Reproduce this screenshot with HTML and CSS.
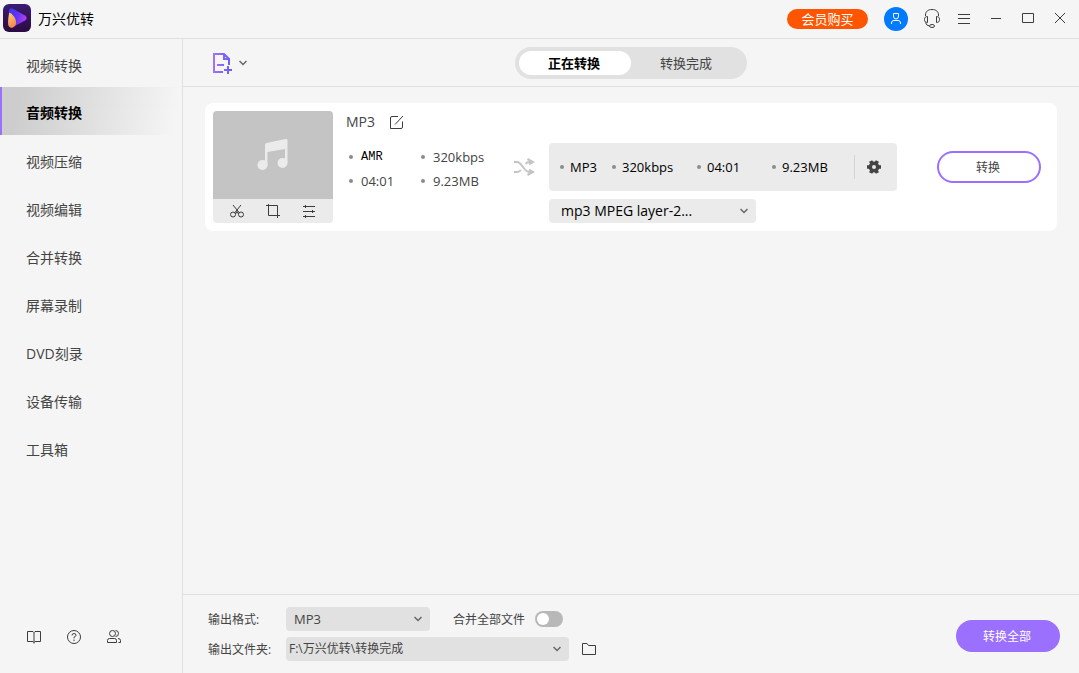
FILE: index.html
```html
<!DOCTYPE html>
<html lang="zh-CN">
<head>
<meta charset="utf-8">
<meta name="viewport" content="width=device-width, initial-scale=1">
<title>万兴优转</title>
<link rel="stylesheet" href="styles.css">
</head>
<body>
<div class="app">
  <header class="titlebar">
    <svg class="logo" viewBox="0 0 28 28" aria-hidden="true">
      <defs>
        <linearGradient id="lg-bg" x1="0" y1="0" x2="0" y2="1"><stop offset="0" stop-color="#3a1c72"/><stop offset="1" stop-color="#2c0b42"/></linearGradient>
        <linearGradient id="lg-play" x1="0" y1="0" x2="1" y2="0.3"><stop offset="0" stop-color="#3a35f0"/><stop offset="0.55" stop-color="#6236f5"/><stop offset="1" stop-color="#b63cf0"/></linearGradient>
        <linearGradient id="lg-drop" x1="0" y1="0" x2="0.4" y2="1"><stop offset="0" stop-color="#ffd27a"/><stop offset="1" stop-color="#f58a4a"/></linearGradient>
      </defs>
      <rect width="28" height="28" rx="6" fill="url(#lg-bg)"/>
      <path d="M6 6.500Q6.500 3.500 9.500 4.500L22 11.500Q25.500 14 22 16.500L9 23.500Q6 24 6 20z" fill="url(#lg-play)"/>
      <path d="M6.300 8.500C11 11 14 16 12.800 20.500C11.500 24.500 6 25 5.200 20.500C4.800 17 5.500 12 6.300 8.500z" fill="url(#lg-drop)"/>
    </svg>
    <h1 class="app-name">万兴优转</h1>
    <div class="window-tools">
      <button class="buy" type="button">会员购买</button>
      <button class="tool avatar" type="button" aria-label="账户">
        <svg viewBox="0 0 24 24"><path d="M9.500 6.500H14.500V9Q14.500 12 12 12Q9.500 12 9.500 9zM7.500 17V16Q7.500 13.500 10 13.500H14Q16.500 13.500 16.500 16V17"/></svg>
      </button>
      <button class="tool" type="button" aria-label="客服">
        <svg viewBox="0 0 24 24"><path d="M5.500 9V8C5.500 4.500 8 2.500 12 2.500S18.500 4.500 18.500 8V9M7.500 9.500V15.500C5.500 15.500 4.500 14.500 4.500 12.500S5.500 9.500 7.500 9.500zM16.500 9.500V15.500C18.500 15.500 19.500 14.500 19.500 12.500S18.500 9.500 16.500 9.500zM5.500 15.500Q6 18.500 9.500 19"/><ellipse cx="12" cy="19" rx="2.500" ry="1.500"/></svg>
      </button>
      <button class="tool" type="button" aria-label="菜单">
        <svg viewBox="0 0 24 24"><path d="M6 7.500H18M6 11.500H18M6 16.500H18"/></svg>
      </button>
      <button class="tool" type="button" aria-label="最小化">
        <svg viewBox="0 0 24 24"><path d="M7 11.500H17"/></svg>
      </button>
      <button class="tool" type="button" aria-label="最大化">
        <svg viewBox="0 0 24 24"><path d="M6.500 6.500H17.500V15.500H6.500z"/></svg>
      </button>
      <button class="tool" type="button" aria-label="关闭">
        <svg viewBox="0 0 24 24"><path d="M7 6L17 16M17 6L7 16"/></svg>
      </button>
    </div>
  </header>

  <aside class="sidebar">
    <nav class="nav">
      <a class="nav-item" href="#">视频转换</a>
      <a class="nav-item active" href="#" aria-current="page">音频转换</a>
      <a class="nav-item" href="#">视频压缩</a>
      <a class="nav-item" href="#">视频编辑</a>
      <a class="nav-item" href="#">合并转换</a>
      <a class="nav-item" href="#">屏幕录制</a>
      <a class="nav-item" href="#">DVD刻录</a>
      <a class="nav-item" href="#">设备传输</a>
      <a class="nav-item" href="#">工具箱</a>
    </nav>
    <div class="side-tools">
      <button class="tool" type="button" aria-label="指南">
        <svg viewBox="0 0 24 24"><path d="M12 7.500L11 6.500H5.500V16.500H11L12 17.500L13 16.500H18.500V6.500H13L12 7.500V18.500"/></svg>
      </button>
      <button class="tool" type="button" aria-label="帮助">
        <svg viewBox="0 0 24 24"><circle cx="12" cy="12" r="6.500"/><path d="M10 10.500Q10 8.500 12 8.500T14 10.300Q14 11.300 12 12.200V13.300M12 14.500V16"/></svg>
      </button>
      <button class="tool" type="button" aria-label="社区">
        <svg viewBox="0 0 24 24"><circle cx="10.500" cy="8.500" r="3"/><path d="M13.500 5.500Q16.500 5.500 16.500 8.500T13.500 11.500M5.500 17.500V15.500Q5.500 13.500 7.500 13.500H12.500Q14.500 13.500 14.500 15.500V17.500zM16 13.500Q18.500 13.500 18.500 15.500V17.500H16.500"/></svg>
      </button>
    </div>
  </aside>

  <main class="main">
    <div class="toolbar">
      <button class="add" type="button" aria-label="添加文件">
        <svg class="add-icon" viewBox="0 0 20 22">
          <defs><linearGradient id="lg-add" gradientUnits="userSpaceOnUse" x1="0" y1="0" x2="20" y2="0"><stop offset="0" stop-color="#9f74fa"/><stop offset="1" stop-color="#6458f5"/></linearGradient></defs>
          <path d="M10 20H1V2H11L16 7V13M11 2V7H16M4 13H11M11 18H19M15 14V22" fill="none" stroke="url(#lg-add)" stroke-width="2"/>
        </svg>
        <svg class="chevron" viewBox="0 0 8 6"><path d="M0.500 1L4 4.500L7.500 1"/></svg>
      </button>
      <div class="tabs" role="tablist">
        <button class="tab selected" type="button" role="tab" aria-selected="true">正在转换</button>
        <button class="tab" type="button" role="tab" aria-selected="false">转换完成</button>
      </div>
    </div>

    <section class="tasks">
      <article class="card">
        <div class="thumb">
          <div class="cover">
            <svg class="note" viewBox="0 0 32 32"><path d="M8 6Q8 4.500 9.500 4L28.500 0Q30.500 -0.300 30.500 1.500V24H28V10L10.500 13V27H8z"/><circle cx="5.500" cy="26" r="5"/><circle cx="25.500" cy="24" r="5"/></svg>
          </div>
          <div class="thumb-tools">
            <button class="tool" type="button" aria-label="剪切">
              <svg viewBox="0 0 24 24"><path d="M8 6L14.500 14M16 6L9.500 14"/><circle cx="8" cy="15.500" r="2.500"/><circle cx="16" cy="15.500" r="2.500"/><path d="M10.500 15L12 12.500L13.500 15"/></svg>
            </button>
            <button class="tool" type="button" aria-label="裁剪">
              <svg viewBox="0 0 24 24"><path d="M7.500 5V16.500H19M5 6.500H16.500V19"/></svg>
            </button>
            <button class="tool" type="button" aria-label="效果">
              <svg viewBox="0 0 24 24"><path d="M6 7.500H18M6 12.500H18M6 17.500H18M8.500 6V9M15.500 11V14M8.500 16V19"/></svg>
            </button>
          </div>
        </div>

        <div class="source">
          <div class="name-row">
            <h2 class="name">MP3</h2>
            <button class="tool" type="button" aria-label="重命名">
              <svg viewBox="0 0 24 24"><path d="M13 6.500H7Q5.500 6.500 5.500 8V18.500H16Q17.500 18.500 17.500 17V11.500M10 14.500L18 6"/></svg>
            </button>
          </div>
          <ul class="meta">
            <li class="bitmap">AMR</li>
            <li>320kbps</li>
            <li>04:01</li>
            <li>9.23MB</li>
          </ul>
        </div>

        <svg class="shuffle" viewBox="0 0 22 18" aria-hidden="true"><path d="M1 4H4C9 4 11 14 16 14H20M1 14H4Q6.500 14 8 12M12.500 6Q14 4 16 4H20M14.500 1L20 4L16 6.500M16 11.500L20 14L14.500 17"/></svg>

        <div class="target">
          <div class="specs">
            <ul class="spec-list">
              <li>MP3</li>
              <li>320kbps</li>
              <li>04:01</li>
              <li>9.23MB</li>
            </ul>
            <button class="gear" type="button" aria-label="设置">
              <svg viewBox="0 0 16 16"><circle cx="8" cy="8" r="3.700" stroke-width="3.400"/><path d="M1 8H3.500M12.500 8H15M4.600 2L5.800 4.200M11.400 2L10.200 4.200M4.600 14L5.800 11.800M11.400 14L10.200 11.800" stroke-width="3.600"/></svg>
            </button>
          </div>
          <div class="pick codec">
            <select aria-label="编码器"><option>mp3 MPEG layer-2...</option></select>
            <svg class="chevron" viewBox="0 0 8 6"><path d="M0.500 1L4 4.500L7.500 1"/></svg>
          </div>
        </div>

        <button class="convert" type="button">转换</button>
      </article>
    </section>

    <footer class="output">
      <div class="fields">
        <div class="field">
          <label for="format">输出格式:</label>
          <div class="pick format">
            <select id="format"><option>MP3</option></select>
            <svg class="chevron" viewBox="0 0 8 6"><path d="M0.500 1L4 4.500L7.500 1"/></svg>
          </div>
          <label class="merge" for="merge">合并全部文件</label>
          <input class="switch" id="merge" type="checkbox" role="switch">
        </div>
        <div class="field">
          <label for="folder">输出文件夹:</label>
          <div class="pick folder">
            <select id="folder"><option>F:\万兴优转\转换完成</option></select>
            <svg class="chevron" viewBox="0 0 8 6"><path d="M0.500 1L4 4.500L7.500 1"/></svg>
          </div>
          <button class="tool open" type="button" aria-label="打开文件夹">
            <svg viewBox="0 0 24 24"><path d="M5.500 17.500V6.500H10L11.500 8.500H18.500V17.500z"/></svg>
          </button>
        </div>
      </div>
      <button class="convert-all" type="button">转换全部</button>
    </footer>
  </main>
</div>
</body>
</html>
```

FILE: styles.css
```css
* {
  box-sizing: border-box;
}

body {
  margin: 0;
  background: #f5f5f5;
  color: #444;
  font: 13px/20px "Open Sans", "Noto Sans CJK SC", sans-serif;
}

h1, h2, ul {
  margin: 0;
  padding: 0;
  font-weight: 400;
  list-style: none;
}

button, select {
  margin: 0;
  padding: 0;
  border: 0;
  background: none;
  color: inherit;
  font: inherit;
}

svg {
  display: block;
}

.app {
  display: grid;
  grid-template-columns: 183px minmax(0, 1fr);
  grid-template-rows: auto minmax(0, 1fr);
  min-height: 100vh;
}

/* Title bar */
.titlebar {
  grid-column: 1 / -1;
  display: flex;
  align-items: center;
  height: 39px;
  padding: 0 7px 0 3px;
  border-bottom: 1px solid #e0e0e0;
}

.logo {
  width: 28px;
  height: 28px;
  margin-bottom: 2px;
}

.app-name {
  margin-left: 7px;
  color: #000;
  font-size: 14px;
}

.window-tools {
  display: flex;
  align-items: center;
  gap: 8px;
  margin-left: auto;
}

.tool {
  flex: none;
  width: 24px;
  height: 24px;
}

.tool svg {
  width: 24px;
  height: 24px;
  fill: none;
  stroke: #3c3c3c;
  stroke-width: 1;
}

.buy {
  width: 81px;
  height: 20px;
  margin-right: 8px;
  border-radius: 10px;
  background: #ff5500;
  color: #fff;
}

.avatar {
  margin-right: 4px;
  border-radius: 50%;
  background: #007aff;
}

.tool.avatar svg {
  stroke: #fff;
}

/* Sidebar */
.sidebar {
  display: flex;
  flex-direction: column;
  justify-content: space-between;
  border-right: 1px solid #e0e0e0;
}

.nav-item {
  display: flex;
  align-items: center;
  height: 48px;
  padding: 6px 0 0 26px;
  color: #444;
  font-size: 14px;
  text-decoration: none;
}

.nav-item.active {
  padding-top: 4px;
  padding-left: 24px;
  border-left: 2px solid #9b70ff;
  background: linear-gradient(100deg, #cdcdcd 10%, #f5f5f5 95%);
  color: #000;
  font-weight: 700;
}

.side-tools {
  display: flex;
  gap: 16px;
  padding: 0 22px 24px;
}

/* Main area */
.main {
  display: flex;
  flex-direction: column;
}

.toolbar {
  display: grid;
  grid-template-columns: 1fr auto 1fr;
  align-items: center;
  height: 48px;
  padding: 0 30px;
  border-bottom: 1px solid #e0e0e0;
}

.add {
  display: flex;
  align-items: center;
  gap: 6px;
}

.add-icon {
  width: 20px;
  height: 22px;
}

.chevron {
  width: 8px;
  height: 6px;
  fill: none;
  stroke: #666;
  stroke-width: 1.500;
}

.tabs {
  display: flex;
  padding: 4px;
  border-radius: 16px;
  background: #e1e1e1;
}

.tab {
  width: 112px;
  height: 24px;
  padding-right: 2px;
  border-radius: 12px;
}

.tab.selected {
  background: #fff;
  color: #000;
  font-weight: 700;
}

.tasks {
  flex: 1;
  padding: 16px 22px;
}

.card {
  display: flex;
  align-items: flex-start;
  padding: 8px 16px 8px 8px;
  border-radius: 8px;
  background: #fff;
}

.thumb {
  flex: none;
  width: 120px;
  border-radius: 4px;
  background: #ebebeb;
  overflow: hidden;
}

.cover {
  display: grid;
  place-items: center;
  height: 88px;
  background: #c4c4c4;
}

.note {
  width: 32px;
  height: 32px;
  fill: #ebebeb;
}

.thumb-tools {
  display: flex;
  justify-content: center;
  gap: 12px;
}

.source {
  flex: none;
  width: 167px;
  margin-left: 13px;
}

.name-row {
  display: flex;
  align-items: center;
  gap: 10px;
  height: 22px;
}

.name {
  font-size: 14px;
}

.meta {
  display: grid;
  grid-template-columns: 72px 1fr;
  gap: 4px 0;
  padding: 14px 0 0 3px;
}

.meta li, .spec-list li {
  display: flex;
  align-items: center;
  gap: 8px;
}

.meta li::before, .spec-list li::before {
  content: "";
  width: 4px;
  height: 4px;
  border-radius: 50%;
  background: #8c8c8c;
}

.meta .bitmap {
  color: #000;
  font-family: "Liberation Mono", monospace;
  font-size: 12px;
}

.shuffle {
  flex: none;
  width: 22px;
  height: 18px;
  margin: 47px 14px 0 0;
  fill: none;
  stroke: #c4c4c4;
  stroke-width: 2;
}

.target {
  flex: none;
  width: 348px;
  padding-top: 32px;
}

.specs {
  display: flex;
  align-items: center;
  justify-content: space-between;
  height: 48px;
  margin-bottom: 8px;
  padding: 0 15px 0 11px;
  border-radius: 4px;
  background: #ebebeb;
  color: #000;
}

.spec-list {
  display: grid;
  grid-template-columns: 52px 85px 75px auto;
}

.spec-list li {
  gap: 6px;
}

.gear {
  height: 24px;
  padding-left: 11px;
  border-left: 1px solid #d4d4d4;
}

.gear svg {
  width: 16px;
  height: 16px;
  fill: none;
  stroke: #444;
}

/* Drop-downs: the arrow shares the cell of the select */
.pick {
  display: grid;
  align-items: center;
  height: 24px;
  border-radius: 4px;
  background: #e1e1e1;
}

.pick select, .pick .chevron {
  grid-area: 1 / 1;
}

.pick select {
  width: 100%;
  height: 24px;
  padding: 0 24px 0 8px;
  appearance: none;
}

.pick .chevron {
  justify-self: end;
  margin-right: 8px;
  pointer-events: none;
}

.pick.codec {
  width: 207px;
  background: #ebebeb;
  color: #000;
  font-size: 14px;
}

.codec select {
  padding-left: 12px;
}

.convert, .convert-all {
  flex: none;
  width: 104px;
  height: 32px;
  padding: 2px 2px 0 0;
  border-radius: 16px;
  font-size: 12px;
}

.convert {
  margin: 40px 0 0 auto;
  border: 2px solid #9b70ff;
  background: #fff;
}

.convert-all {
  margin-top: 4px;
  background: #9b70ff;
  color: #fff;
}

/* Output settings */
.output {
  display: flex;
  align-items: center;
  justify-content: space-between;
  padding: 12px 19px 12px 25px;
  border-top: 1px solid #e0e0e0;
  font-size: 12px;
}

.fields {
  display: grid;
  gap: 6px;
}

.field {
  display: grid;
  grid-template-columns: 78px auto auto auto;
  justify-content: start;
  align-items: center;
}

.field label {
  padding-top: 2px;
}

.pick.format {
  width: 144px;
  font-size: 13px;
}

.merge {
  margin-left: 23px;
}

.pick.folder {
  width: 283px;
}

.folder select {
  padding-left: 3px;
}

.switch {
  width: 28px;
  height: 16px;
  margin: 0 0 0 10px;
  padding: 2px;
  border-radius: 8px;
  background: #b8b8b8;
  appearance: none;
}

.switch::before {
  content: "";
  display: block;
  width: 12px;
  height: 12px;
  border-radius: 50%;
  background: #fff;
}

.switch:checked {
  background: #9b70ff;
}

.switch:checked::before {
  margin-left: auto;
}

.open {
  margin-left: 8px;
}
```
